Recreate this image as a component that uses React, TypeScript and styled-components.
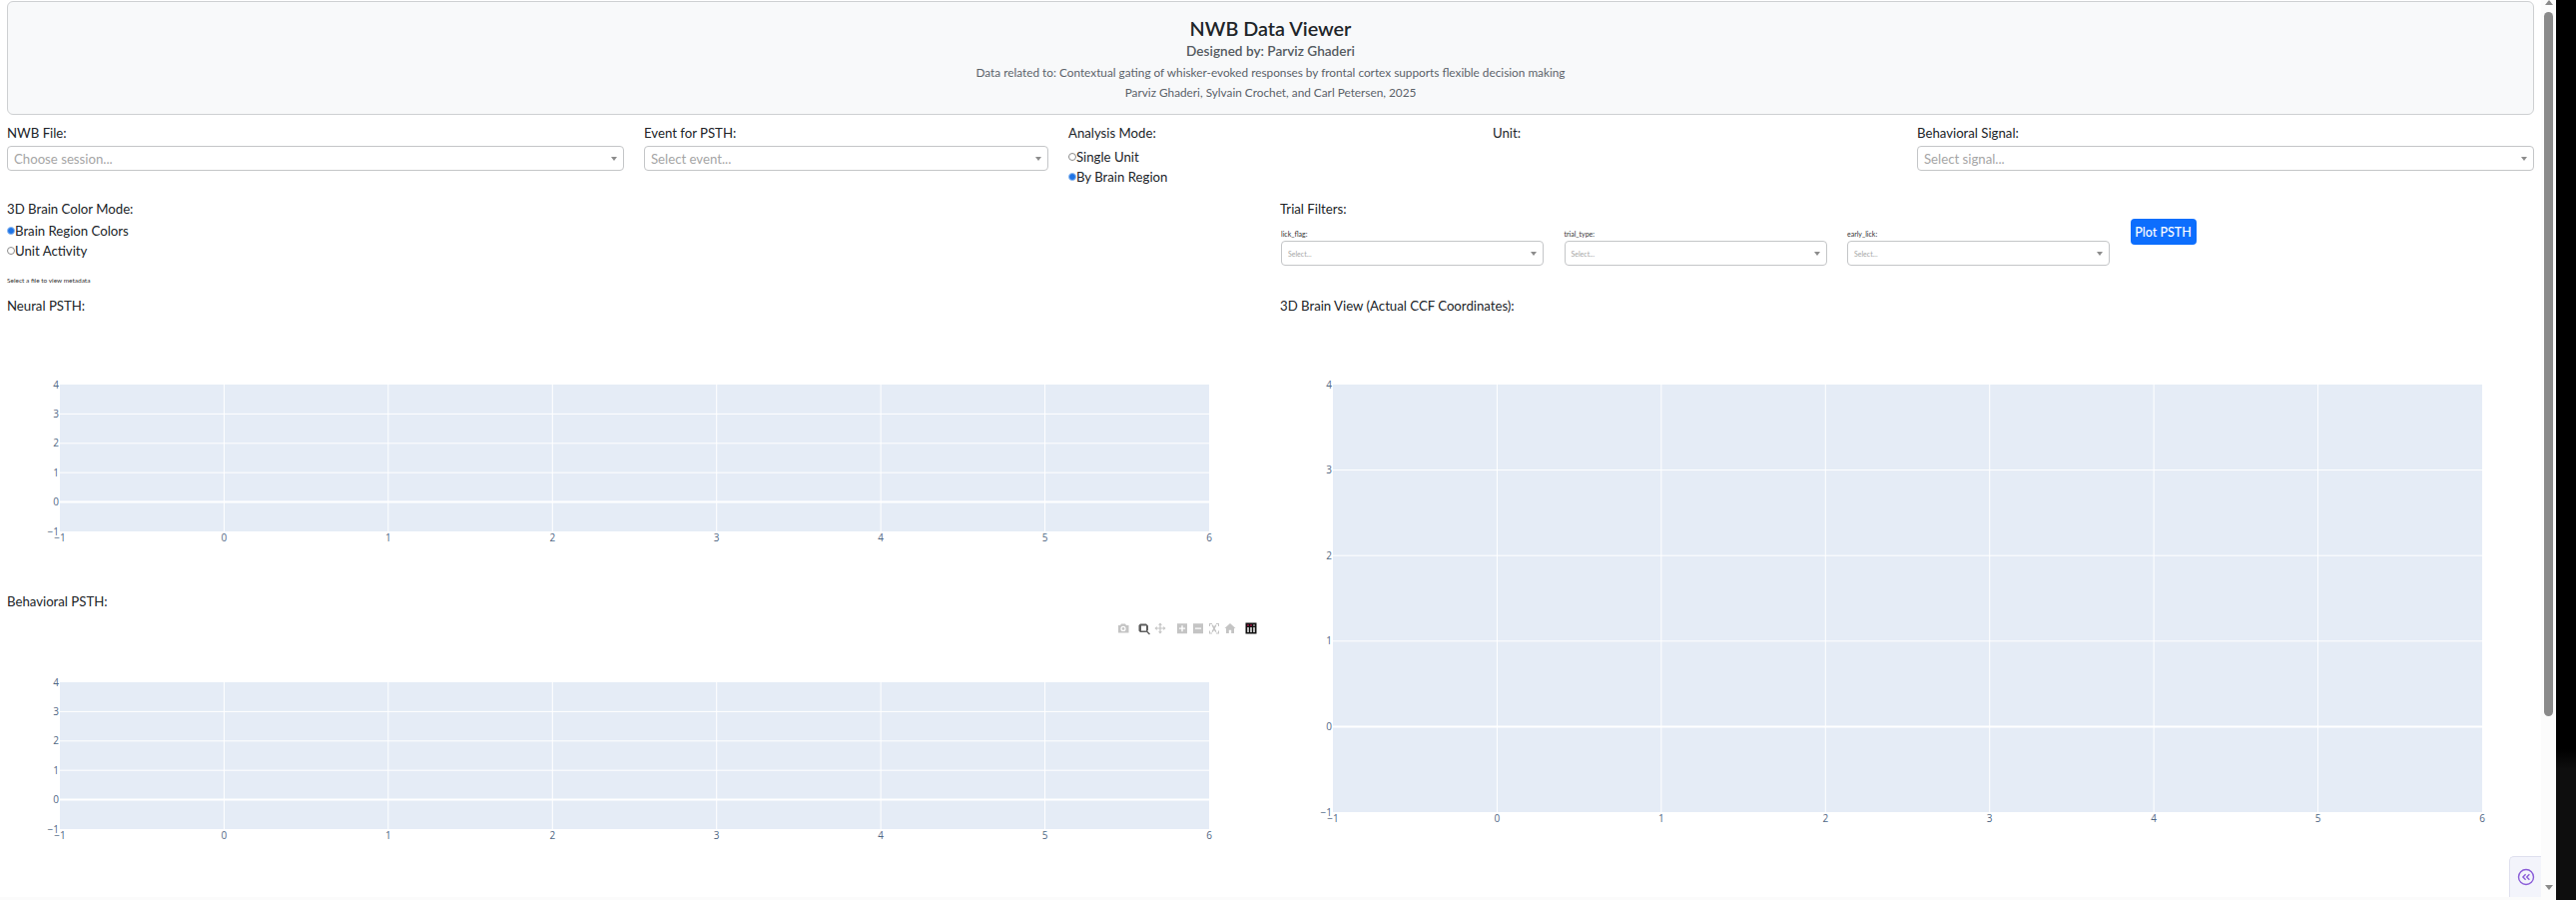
import React from "react";
import styled, { createGlobalStyle } from "styled-components";

const Global = createGlobalStyle`
  html, body { margin: 0; padding: 0; height: 100%; overflow: hidden; background: #fbfbfb; }
  body { font-family: "Lato", "Open Sans", sans-serif; color: #212529; }
  #root { height: 901px; }
`;

const Shell = styled.div`
  display: flex;
  width: 2580px;
  height: 901px;
  overflow: hidden;
  position: relative;
  background: #fbfbfb;
`;
const Page = styled.main`
  width: 2545px;
  height: 898px;
  background: #fff;
  padding: 1px 7px 0 7px;
  box-sizing: border-box;
  overflow: hidden;
  flex: none;
`;
const Gutter = styled.div`
  width: 15px;
  height: 901px;
  background: #fcfcfc;
  display: flex;
  flex-direction: column;
  align-items: center;
  flex: none;
`;
const ArrowUp = styled.div`
  width: 0; height: 0;
  border-left: 4.5px solid transparent;
  border-right: 4.5px solid transparent;
  border-bottom: 5px solid #8a8a8a;
`;
const Thumb = styled.div`
  width: 9px;
  height: 705px;
  margin-top: 7px;
  background: #8a8a8a;
  border-radius: 5px;
`;
const ArrowDown = styled.div`
  width: 0; height: 0;
  margin-top: 169px;
  border-left: 4.5px solid transparent;
  border-right: 4.5px solid transparent;
  border-top: 5px solid #8a8a8a;
`;
const Backdrop = styled.div`
  flex: 1;
  background: linear-gradient(#000 750px, #0e0e0e 770px);
`;
const Header = styled.header`
  height: 114px;
  box-sizing: border-box;
  width: 2531px;
  background: #f8f9fa;
  border: 1px solid #ced0d2;
  border-radius: 6px;
  display: flex;
  flex-direction: column;
  align-items: center;
  padding-top: 12px;
`;
const Title = styled.h1`
  margin: 0;
  font-size: 19.800px;
  line-height: 28px;
  font-weight: 600;
  color: #212529;
`;
const Byline = styled.h2`
  margin: 0;
  font-size: 13.600px;
  line-height: 18px;
  font-weight: 600;
  color: #555b61;
`;
const Note = styled.p`
  margin: 0;
  font-size: 11.800px;
  line-height: 19.500px;
  color: #5c636a;
  &:first-of-type { margin-top: 3px; }
`;
const ControlRow = styled.section`
  display: grid;
  grid-template-columns: 618px 405px 405px 405px 618px;
  column-gap: 20px;
  margin-top: 9px;
  height: 76px;
`;
const Control = styled.div`
  display: flex;
  flex-direction: column;
  min-width: 0;
`;
const Label = styled.label`
  font-size: 13.200px;
  line-height: 19px;
  color: #212529;
  display: block;
`;
const SelectBox = styled.div<{ $small?: boolean }>`
  height: 25px;
  box-sizing: border-box;
  margin-top: ${(p) => (p.$small ? 0 : 3)}px;
  border: 1px solid #c4c6c8;
  border-radius: 4px;
  background: #fff;
  display: flex;
  align-items: center;
  justify-content: space-between;
  padding: 0 6px;
  color: #a6a6a6;
  font-size: ${(p) => (p.$small ? 7 : 13.2)}px;
`;
const Caret = styled.span`
  width: 0; height: 0;
  border-left: 3px solid transparent;
  border-right: 3px solid transparent;
  border-top: 4px solid #8c8c8c;
`;
const Radio = styled.div`
  display: flex;
  align-items: center;
  font-size: 13.200px;
  line-height: 20px;
  color: #212529;
`;
const Dot = styled.span<{ $on?: boolean }>`
  width: 8px;
  height: 8px;
  flex: none;
  box-sizing: border-box;
  border-radius: 50%;
  border: 1px solid ${(p) => (p.$on ? "#8fbaf0" : "#8c8c8c")};
  background: ${(p) => (p.$on ? "#1f74e6" : "#fff")};
`;
const RadioStack = styled.div<{ $top: number }>`
  margin-top: ${(p) => p.$top}px;
`;
const Columns = styled.div`
  display: grid;
  grid-template-columns: 1255px 1256px;
  column-gap: 20px;
`;
const Column = styled.div`
  min-width: 0;
`;
const Meta = styled.div`
  font-size: 6.500px;
  line-height: 10px;
  color: #333;
  margin-top: 15px;
`;
const OptionsBlock = styled.div`
  height: 97px;
`;
const FilterRow = styled.div`
  display: flex;
  align-items: flex-start;
  margin-left: 1px;
  gap: 20.500px;
`;
const Filter = styled.div`
  width: 263px;
  padding-top: 9px;
`;
const FilterLabel = styled.div`
  font-size: 7px;
  line-height: 13px;
  color: #333;
`;
const PlotButton = styled.button`
  width: 66px;
  height: 26px;
  border: 0;
  border-radius: 4px;
  background: #0d6efd;
  color: #fff;
  font: 500 12.500px "Lato", sans-serif;
  padding: 0;
`;
const ChartWrap = styled.figure<{ $h: number }>`
  margin: 0;
  position: relative;
  height: ${(p) => p.$h}px;
`;
const Svg = styled.svg`
  display: block;
  overflow: visible;
`;
const Tick = styled.text`
  font-family: "Open Sans", "DejaVu Sans", sans-serif;
  font-size: 10px;
  fill: #506784;
`;
const ModeBar = styled.div`
  position: absolute;
  right: 0;
  top: 9px;
  width: 150px;
  height: 16px;
`;
const WidgetTab = styled.div`
  position: absolute;
  left: 2513px;
  top: 857px;
  width: 32px;
  height: 41px;
  box-sizing: border-box;
  background: #f3f4fb;
  border: 1px solid #dfe0ee;
  border-right: 0;
  border-bottom: 0;
  border-radius: 5px 0 0 0;
  display: flex;
  align-items: center;
  justify-content: center;
`;

function Chart({ height, plotTop, plotHeight, plotLeft, plotWidth, children }: {
  height: number; plotTop: number; plotHeight: number; plotLeft: number; plotWidth: number; children?: React.ReactNode;
}) {
  const xs = [-1, 0, 1, 2, 3, 4, 5, 6];
  const ys = [-1, 0, 1, 2, 3, 4];
  const xp = (v: number) => plotLeft + ((v + 1) / 7) * plotWidth;
  const yp = (v: number) => plotTop + plotHeight - ((v + 1) / 5) * plotHeight;
  return (
    <ChartWrap $h={height}>
      <Svg width="100%" height={height}>
        <rect x={plotLeft} y={plotTop} width={plotWidth} height={plotHeight} fill="#e5ecf6" />
        {xs.slice(1, -1).map((v) => (
          <line key={v} x1={xp(v)} x2={xp(v)} y1={plotTop} y2={plotTop + plotHeight} stroke="#fff" strokeWidth={1} />
        ))}
        {ys.slice(1, -1).map((v) => (
          <line key={v} x1={plotLeft} x2={plotLeft + plotWidth} y1={yp(v)} y2={yp(v)} stroke="#fff" strokeWidth={v === 0 ? 2 : 1} />
        ))}
        {ys.map((v) => (
          <Tick key={v} x={plotLeft - 1} y={yp(v) + 3.5} textAnchor="end">{v < 0 ? "\u2212" + -v : v}</Tick>
        ))}
        {xs.map((v) => (
          <Tick key={v} x={xp(v)} y={plotTop + plotHeight + 9.5} textAnchor="middle">{v < 0 ? "\u2212" + -v : v}</Tick>
        ))}
      </Svg>
      {children}
    </ChartWrap>
  );
}

function ModeIcons() {
  return (
    <Svg width="150" height="16" viewBox="0 0 150 16">
      <g fill="#c4c4c4">
        <path d="M8 5h2l1-1.500h4L16 5h2.500v7.500H8z M13 5.800a2.600 2.600 0 1 0 0 5.200a2.600 2.600 0 0 0 0-5.200z" fillRule="evenodd" />
        <circle cx="13" cy="8.400" r="1.300" />
        <path d="M50 2.500l2 2.200h-1.400v2.700h2.700V6l2.200 2-2.200 2V8.600h-2.700v2.700H52l-2 2.200-2-2.200h1.400V8.600h-2.700V10l-2.200-2 2.200-2v1.400h2.700V4.700H48z" />
        <path d="M67 3.200h10v10H67z M71.300 5.200v2.400h-2.400v1.200h2.400v2.400h1.400V8.800h2.400V7.600h-2.400V5.200z" fillRule="evenodd" />
        <path d="M83 3.200h10v10H83z M84.900 7.600v1.200h6.200V7.600z" fillRule="evenodd" />
        <path d="M99 3h3v1h-2v2h-1z M106 3h3v3h-1V4h-2z M99 10.500h1v2h2v1h-3z M108 10.500h1v3h-3v-1h2z M101.500 5l1-.8 1.500 2 1.500-2 1 .8-1.700 3.200 1.700 3-1 .8-1.500-2-1.500 2-1-.8 1.700-3z" />
        <path d="M120 3l5.500 5H124v5h-2.800v-3.200h-2.400V13H116V8h-1.500z" />
      </g>
      <path d="M30 3.500h6l2 2v4.500l-.8.800 2.800 2.700-1 1-2.800-2.700-.7.200h-5.500l-1.500-1.500V5z M31 5.500v5h5v-5z" fillRule="evenodd" fill="#5e5e5e" />
      <rect x="135.500" y="2.500" width="11" height="11" fill="#111" />
      <rect x="137.300" y="4.300" width="1.400" height="1.400" fill="#e6175c" />
      <rect x="137.300" y="7" width="1.400" height="5" fill="#fff" />
      <rect x="140.300" y="4.300" width="1.400" height="1.400" fill="#e6175c" />
      <rect x="140.300" y="7" width="1.400" height="5" fill="#fff" />
      <rect x="143.300" y="4.300" width="1.400" height="1.400" fill="#ddd" />
      <rect x="143.300" y="7" width="1.400" height="5" fill="#fff" />
    </Svg>
  );
}

export default function App() {
  return (
    <Shell>
      <Global />
      <Page>
        <Header>
          <Title>NWB Data Viewer</Title>
          <Byline>Designed by: Parviz Ghaderi</Byline>
          <Note>Data related to: Contextual gating of whisker-evoked responses by frontal cortex supports flexible decision making</Note>
          <Note>Parviz Ghaderi, Sylvain Crochet, and Carl Petersen, 2025</Note>
        </Header>
        <ControlRow>
          <Control>
            <Label>NWB File:</Label>
            <SelectBox>Choose session...<Caret /></SelectBox>
          </Control>
          <Control>
            <Label>Event for PSTH:</Label>
            <SelectBox>Select event...<Caret /></SelectBox>
          </Control>
          <Control>
            <Label>Analysis Mode:</Label>
            <RadioStack $top={4}>
              <Radio><Dot />Single Unit</Radio>
              <Radio><Dot $on />By Brain Region</Radio>
            </RadioStack>
          </Control>
          <Control>
            <Label>Unit:</Label>
          </Control>
          <Control>
            <Label>Behavioral Signal:</Label>
            <SelectBox>Select signal...<Caret /></SelectBox>
          </Control>
        </ControlRow>
        <Columns>
          <Column>
            <OptionsBlock>
              <Label>3D Brain Color Mode:</Label>
              <RadioStack $top={2}>
                <Radio><Dot $on />Brain Region Colors</Radio>
                <Radio><Dot />Unit Activity</Radio>
              </RadioStack>
              <Meta>Select a file to view metadata</Meta>
            </OptionsBlock>
            <Label>Neural PSTH:</Label>
            <Chart height={277} plotTop={69} plotHeight={147} plotLeft={53} plotWidth={1151} />
            <Label>Behavioral PSTH:</Label>
            <Chart height={250} plotTop={71} plotHeight={147} plotLeft={53} plotWidth={1151}>
              <ModeBar><ModeIcons /></ModeBar>
            </Chart>
          </Column>
          <Column>
            <OptionsBlock>
              <Label>Trial Filters:</Label>
              <FilterRow>
                <Filter>
                  <FilterLabel>lick_flag:</FilterLabel>
                  <SelectBox $small>Select...<Caret /></SelectBox>
                </Filter>
                <Filter>
                  <FilterLabel>trial_type:</FilterLabel>
                  <SelectBox $small>Select...<Caret /></SelectBox>
                </Filter>
                <Filter>
                  <FilterLabel>early_lick:</FilterLabel>
                  <SelectBox $small>Select...<Caret /></SelectBox>
                </Filter>
                <PlotButton>Plot PSTH</PlotButton>
              </FilterRow>
            </OptionsBlock>
            <Label>3D Brain View (Actual CCF Coordinates):</Label>
            <Chart height={540} plotTop={69} plotHeight={428} plotLeft={53} plotWidth={1151} />
          </Column>
        </Columns>
      </Page>
      <Gutter>
        <ArrowUp />
        <Thumb />
        <ArrowDown />
      </Gutter>
      <Backdrop />
      <WidgetTab>
        <Svg width="18" height="18" viewBox="0 0 18 18" fill="none" stroke="#8a5cd8" strokeWidth="1.400">
          <circle cx="9" cy="9" r="7.500" />
          <path d="M8.600 6.300L5.900 9l2.700 2.700M12.400 6.300L9.700 9l2.700 2.700" />
        </Svg>
      </WidgetTab>
    </Shell>
  );
}
